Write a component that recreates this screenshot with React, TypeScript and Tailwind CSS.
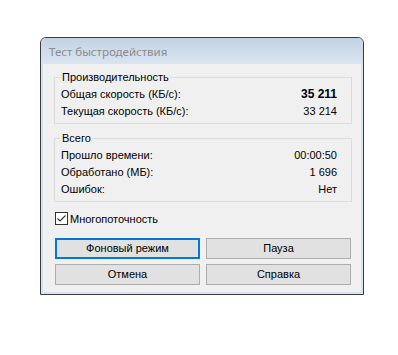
import React from "react";

const body = { fontFamily: '"Liberation Sans", Arial, sans-serif' };

function Row({ label, value, bold }: { label: string; value: string; bold?: boolean }) {
  return (
    <div className="flex h-[17px] items-center justify-between leading-[17px]">
      <span>{label}</span>
      <span className={bold ? "font-bold text-[12px]" : ""}>{value}</span>
    </div>
  );
}

function Group({ title, children, className }: { title: string; children: React.ReactNode; className?: string }) {
  return (
    <div className={"relative ml-[11px] w-[298px] border border-[#dcdcdc] pl-[6px] pr-[14px] pb-[3px] " + (className ?? "")}>
      <span className="absolute left-[6px] top-[-9px] bg-[#f0f0f0] px-px leading-[17px]">{title}</span>
      {children}
    </div>
  );
}

function Btn({ children, focused }: { children: React.ReactNode; focused?: boolean }) {
  return (
    <div
      className={
        "flex h-[21px] w-[145px] items-center justify-center bg-[#e1e1e1] " +
        (focused ? "border-2 border-[#0078d7]" : "border border-[#adadad]")
      }
    >
      {children}
    </div>
  );
}

export default function App() {
  return (
    <div className="h-[355px] w-[398px] bg-white pl-[40px] pt-[37px]" style={body}>
      <div className="flex h-[258px] w-[324px] flex-col overflow-hidden rounded-t-[6px] border border-[#3c3c3c] bg-[#d7e3f0]">
        <div className="flex h-[26px] items-center bg-gradient-to-b from-[#c3d2e3] to-[#dae5f1] pl-[8px] pt-[2px]">
          <span className="text-[11.5px] text-[#8c8c8c]" style={{ fontFamily: '"Noto Sans", "Open Sans", sans-serif' }}>
            Тест быстродействия
          </span>
        </div>
        <div className="mx-[2px] mb-[2px] flex flex-1 flex-col bg-[#f0f0f0] pt-[13px] text-[11px] text-black">
          <Group title="Производительность" className="pt-[8px]">
            <Row label="Общая скорость (КБ/с):" value="35 211" bold />
            <Row label="Текущая скорость (КБ/с):" value="33 214" />
          </Group>
          <Group title="Всего" className="mt-[14px] pt-[8px]">
            <Row label="Прошло времени:" value="00:00:50" />
            <Row label="Обработано (МБ):" value="1 696" />
            <Row label="Ошибок:" value="Нет" />
          </Group>
          <div className="ml-[12px] mt-[10px] flex h-[13px] items-center">
            <div className="flex h-[13px] w-[13px] items-center justify-center border border-[#333333] bg-white">
              <svg width="11" height="11" viewBox="0 0 11 11">
                <path d="M1.5 5.5 L4 8 L9.5 2.5" fill="none" stroke="#333333" strokeWidth="1.2" />
              </svg>
            </div>
            <span className="ml-[2px] pt-[2px] leading-[13px]">Многопоточность</span>
          </div>
          <div className="ml-[12px] mt-[13px] grid w-[296px] grid-cols-[145px_145px] gap-x-[6px] gap-y-[5px]">
            <Btn focused>Фоновый режим</Btn>
            <Btn>Пауза</Btn>
            <Btn>Отмена</Btn>
            <Btn>Справка</Btn>
          </div>
        </div>
      </div>
    </div>
  );
}
